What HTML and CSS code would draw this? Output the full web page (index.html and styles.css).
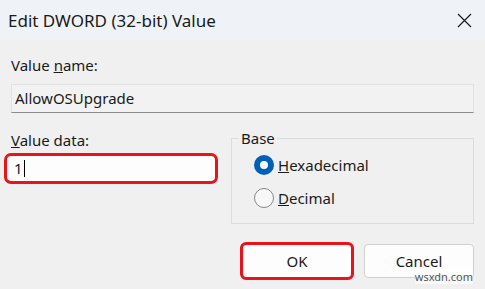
FILE: index.html
```html
<!DOCTYPE html>
<html lang="en">
<head>
    <meta charset="UTF-8">
    <title>Edit DWORD (32-bit) Value</title>
    <link rel="stylesheet" href="styles.css">
</head>
<body>

    <div class="dialog">
        <!-- Title bar -->
        <div class="titlebar">
            <span class="title">Edit DWORD (32-bit) Value</span>
            <span class="close">
                <svg width="15" height="15" viewBox="0 0 15 15">
                    <path d="M1 1 L14 14 M14 1 L1 14" stroke="#1a1a1a" stroke-width="1.2" fill="none"/>
                </svg>
            </span>
        </div>

        <div class="content">
            <div class="label">Value <u>n</u>ame:</div>
            <div class="field readonly">AllowOSUpgrade</div>

            <div class="row">
                <div class="data-col">
                    <div class="label"><u>V</u>alue data:</div>
                    <div class="field data marked">1<span class="caret"></span></div>
                </div>

                <fieldset class="base">
                    <legend>Base</legend>
                    <div class="radio">
                        <span class="dot checked"></span>
                        <span><u>H</u>exadecimal</span>
                    </div>
                    <div class="radio">
                        <span class="dot"></span>
                        <span><u>D</u>ecimal</span>
                    </div>
                </fieldset>
            </div>

            <div class="buttons">
                <button class="btn marked">OK</button>
                <button class="btn">Cancel</button>
            </div>

            <span class="watermark">wsxdn.com</span>
        </div>
    </div>

</body>
</html>
```

FILE: styles.css
```css
* {
    margin: 0;
    padding: 0;
    box-sizing: border-box;
    font-family: 'Noto Sans', 'Liberation Sans', sans-serif;
}
body {
    background: #f0f0f0;
    width: 485px;
    height: 289px;
    overflow: hidden;
}
.dialog {
    position: relative;
    height: 289px;
}
.titlebar {
    height: 40px;
    background: #eff3f8;
    display: flex;
    align-items: center;
    justify-content: space-between;
    padding: 0 13px 0 8px;
}
.title {
    font-size: 17px;
    color: #1a1a1a;
}
.close {
    display: flex;
}
.content {
    padding: 15px 11px 0 10px;
    color: #1a1a1a;
    font-size: 15px;
}
.label {
    height: 20px;
    line-height: 20px;
    margin-left: 1px;
}
.field {
    height: 29px;
    line-height: 27px;
    padding: 0 3px;
    border: 1px solid #e2e2e2;
    margin-top: 9px;
}
.readonly {
    background: #f2f2f2;
    border-bottom-color: #8a8a8a;
    margin-left: 1px;
}
.row {
    display: flex;
    justify-content: space-between;
    margin-top: 17px;
}
.data-col {
    width: 206px;
}
.data {
    background: #fdfdfd;
    height: 27px;
    line-height: 25px;
    padding-left: 7px;
    margin: 5px 0 0 -4px;
    border-bottom: 1px solid #005fb8;
}
.caret {
    display: inline-block;
    width: 1px;
    height: 17px;
    background: #000;
    vertical-align: -3px;
    margin-left: 1px;
}
.marked {
    outline: 3px solid #e8131b;
    outline-offset: -1px;
    border-radius: 5px;
}
.base {
    width: 243px;
    height: 96px;
    border: 1px solid #dcdcdc;
    padding: 0 0 0 22px;
    margin-top: -2px;
}
.base legend {
    padding: 0 2px;
    margin-left: -15px;
}
.radio {
    display: flex;
    align-items: center;
    gap: 4px;
    height: 33px;
}
.dot {
    width: 20px;
    height: 20px;
    border-radius: 50%;
    border: 1px solid #868686;
    background: #f7f7f7;
}
.dot.checked {
    border: none;
    background: #005fb8;
    position: relative;
}
.dot.checked::after {
    content: "";
    position: absolute;
    left: 6px;
    top: 6px;
    width: 8px;
    height: 8px;
    border-radius: 50%;
    background: #fff;
}
.buttons {
    display: flex;
    justify-content: flex-end;
    gap: 12px;
    margin-top: 20px;
}
.btn {
    width: 110px;
    height: 34px;
    background: #fdfdfd;
    border: 1px solid #d0d0d0;
    border-radius: 4px;
    font-size: 15px;
    color: #1a1a1a;
}
.watermark {
    position: absolute;
    right: 12px;
    bottom: 5px;
    font-size: 11px;
    color: #555;
    background: rgba(255, 255, 255, 0.6);
}
```
